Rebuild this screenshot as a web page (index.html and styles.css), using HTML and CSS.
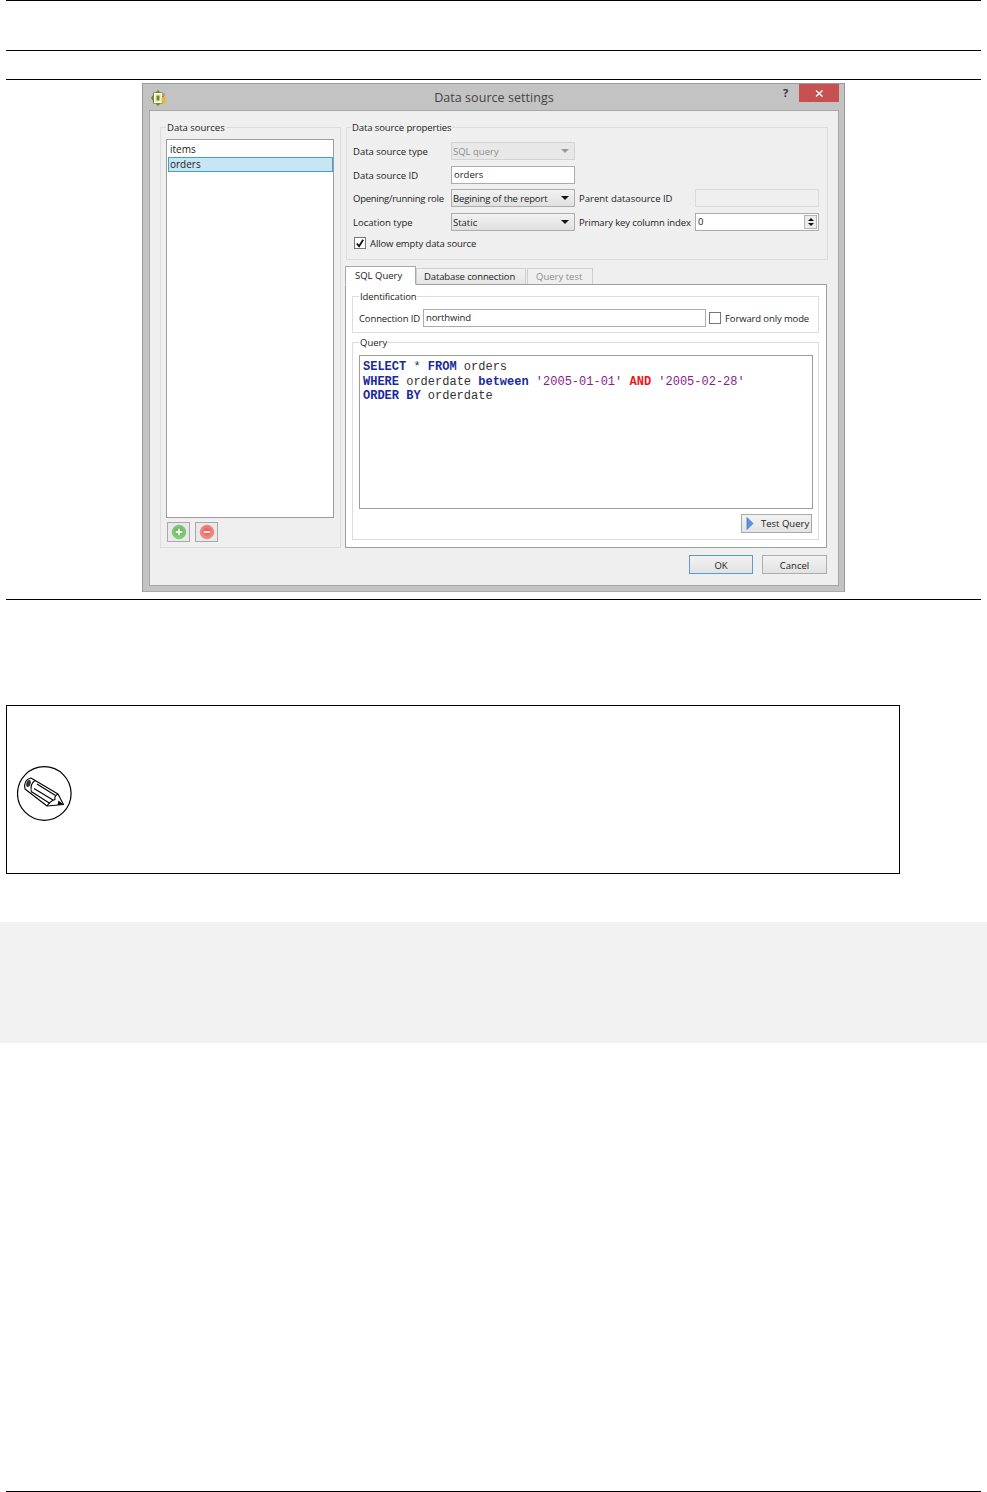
FILE: index.html
```html
<!DOCTYPE html>
<html lang="en">
<head>
<meta charset="utf-8">
<title>Data source settings</title>
<link rel="stylesheet" href="styles.css">
</head>
<body>
<div class="page">
  <div class="rule rule-top"></div>
  <div class="rule rule-b"></div>
  <div class="rule rule-c"></div>
  <figure class="figure">
    <div class="dialog">
      <div class="titlebar">
        <svg class="app-icon" viewBox="0 0 16 16" width="16" height="16"><path d="M7 0l2.500 2.500H12V5l1.500 3L12 11v2.500H9.500L7 16l-2.500-2.500H2V11L0 8l2-3V2.500h2.500z" fill="#6f8a1f"/><rect x="3.500" y="3.500" width="7" height="9" fill="#e8efd8" stroke="#fff"/><rect x="5.500" y="5.500" width="3" height="5" fill="#6f8a1f"/><rect x="10.500" y="7" width="4" height="6" fill="#e9b52e"/><rect x="11" y="3" width="3" height="3" fill="#c9948a"/></svg>
        <span class="title">Data source settings</span>
        <span class="help">?</span>
        <span class="close"><svg viewBox="0 0 9 9" width="9" height="9"><path d="M1 1.500l6.500 6M7.500 1.500L1 7.500" stroke="#fff" stroke-width="1.400" fill="none"/></svg></span>
      </div>
      <div class="client">
        <div class="panes">
          <section class="group sources">
            <span class="legend">Data sources</span>
            <div class="listbox">
              <div class="item">items</div>
              <div class="item selected">orders</div>
            </div>
            <div class="list-buttons">
              <button class="tool"><svg viewBox="0 0 16 16" width="16" height="16"><defs><radialGradient id="gg" cx=".5" cy=".45" r=".6"><stop offset="0" stop-color="#57ad4d"/><stop offset="1" stop-color="#93d488"/></radialGradient></defs><circle cx="8" cy="8" r="6.800" fill="url(#gg)" stroke="#6cb563" stroke-width=".7"/><path d="M8 4.800v6.400M4.800 8h6.400" stroke="#f2fff0" stroke-width="1.800"/></svg></button>
              <button class="tool"><svg viewBox="0 0 16 16" width="16" height="16"><defs><radialGradient id="rg" cx=".5" cy=".45" r=".6"><stop offset="0" stop-color="#e8524c"/><stop offset="1" stop-color="#f59a92"/></radialGradient></defs><circle cx="8" cy="8" r="6.800" fill="url(#rg)" stroke="#e0766f" stroke-width=".7"/><path d="M4.800 8h6.400" stroke="#fff4f2" stroke-width="1.800"/></svg></button>
            </div>
          </section>
          <div class="right">
            <section class="group props">
              <span class="legend legend-props">Data source properties</span>
              <div class="form-row">
                <span class="lbl">Data source type</span>
                <div class="combo disabled"><span>SQL query</span><i class="arrow"></i></div>
              </div>
              <div class="form-row">
                <span class="lbl">Data source ID</span>
                <div class="field wide">orders</div>
              </div>
              <div class="form-row">
                <span class="lbl tighter">Opening/running role</span>
                <div class="combo"><span class="tight">Begining of the report</span><i class="arrow"></i></div>
                <span class="lbl2">Parent datasource ID</span>
                <div class="field parent"></div>
              </div>
              <div class="form-row">
                <span class="lbl">Location type</span>
                <div class="combo"><span>Static</span><i class="arrow"></i></div>
                <span class="lbl2 tight">Primary key column index</span>
                <div class="field spin"><span>0</span><span class="spinner"><i class="up"></i><i class="down"></i></span></div>
              </div>
              <label class="check-row"><span class="check"><svg viewBox="0 0 11 11" width="11" height="11"><path d="M2 5.500l2.500 3L9 1.500" stroke="#111" stroke-width="2" fill="none"/></svg></span><span class="tight">Allow empty data source</span></label>
            </section>
            <div class="tabs">
              <span class="tab active">SQL Query</span>
              <span class="tab db"><span class="tight">Database connection</span></span>
              <span class="tab off">Query test</span>
            </div>
            <div class="tabpanel">
              <section class="group ident">
                <span class="legend"><span class="tight">Identification</span></span>
                <span class="conn-lbl tight">Connection ID</span>
                <div class="field conn"><span class="tight">northwind</span></div>
                <span class="check empty"></span>
                <span class="fwd tight">Forward only mode</span>
              </section>
              <section class="group query">
                <span class="legend">Query</span>
                <pre class="editor"><span class="kw">SELECT</span> * <span class="kw">FROM</span> orders
<span class="kw">WHERE</span> orderdate <span class="kw">between</span> <span class="str">'2005-01-01'</span> <span class="red">AND</span> <span class="str">'2005-02-28'</span>
<span class="kw">ORDER BY</span> orderdate</pre>
                <div class="test-row"><button class="test"><svg viewBox="0 0 8 13" width="8" height="13"><path d="M1 .500L7 6.500 1 12.500z" fill="#5b93de" stroke="#3b74c4" stroke-width=".7"/></svg>Test Query</button></div>
              </section>
            </div>
          </div>
        </div>
        <div class="actions">
          <button class="btn default">OK</button>
          <button class="btn cancel">Cancel</button>
        </div>
      </div>
    </div>
  </figure>
  <div class="rule rule-d"></div>
  <aside class="note">
    <svg class="pencil" viewBox="0 0 55 55" width="55" height="55">
      <circle cx="27.300" cy="27.500" r="26.800" fill="#fff" stroke="#000" stroke-width="1.200"/>
      <g fill="none" stroke="#000" stroke-width="1.100" stroke-linejoin="round">
        <path d="M8 23Q6 14 14 12L41 28 46.500 38.500 30 40Z" fill="#fff"/>
        <path d="M18 14.500Q12.500 18 14.500 26.500"/>
        <path d="M20 18L38.500 29.500M17 22.500L36 34M15 26L33 37.500"/>
        <path d="M41 28Q37 30 38 33.500 33 35 30 40"/>
      </g>
      <ellipse cx="11.500" cy="17.500" rx="2.200" ry="3.600" fill="#333" transform="rotate(15 11.500 17.500)"/>
      <path d="M46.500 38.500L41.500 34.500 40.500 39z" fill="#000"/>
    </svg>
  </aside>
  <div class="band"></div>
  <div class="rule rule-bottom"></div>
</div>
</body>
</html>
```
FILE: styles.css
```css
* { box-sizing: border-box; }
html, body { margin: 0; padding: 0; background: #fff; }
body { font-family: "Open Sans", "Noto Sans", sans-serif; color: #222; }
.page { width: 987px; height: 1492px; overflow: hidden; display: flex; flex-direction: column; }
.rule { height: 1px; margin: 0 6px; background: #000; flex: none; }
.rule-b { margin-top: 49px; }
.rule-c { margin-top: 28px; }
.figure { margin: 3px 0 0 142px; width: 703px; height: 509px; flex: none; }
.rule-d { margin-top: 7px; }
.tight { letter-spacing: -.12px; }
.tighter { letter-spacing: -.25px; }

.dialog { width: 703px; height: 509px; background: #c3c3c3; border: 1px solid #9a9a9a; border-bottom-color: #aaa; padding: 0 5px 5px 6px; display: flex; flex-direction: column; font-size: 10px; }
.titlebar { height: 26px; flex: none; display: flex; align-items: center; position: relative; }
.app-icon { margin: 1px 0 0 2px; }
.title { position: absolute; left: 0; right: 0; text-align: center; font-size: 12.500px; color: #444; top: 5px; letter-spacing: .05px; }
.help { position: absolute; left: 634px; top: 1px; font-weight: 700; font-size: 11px; color: #333; }
.close { position: absolute; right: 0; top: 0; width: 40px; height: 18px; background: #c75050; display: flex; align-items: center; justify-content: center; }
.client { flex: 1; background: #efefef; border: 1px solid #a6a6a6; padding: 16px 10px 0 10px; display: flex; flex-direction: column; }
.panes { display: flex; gap: 4px; }
.group { border: 1px solid #dcdcdc; position: relative; }
.legend { position: absolute; left: 5px; top: -6px; background: #efefef; padding: 0 1px; line-height: 11px; font-size: 9.500px; white-space: nowrap; }
.legend-props { left: 4px; letter-spacing: -.1px; }
.sources { width: 181px; height: 421px; flex: none; padding: 11px 6px 0 5px; }
.listbox { height: 379px; background: #fff; border: 1px solid #9d9d9d; padding: 2px 0 0 1px; font-size: 10px; }
.item { height: 15px; line-height: 15px; padding-left: 2px; }
.selected { background: #c8e5f4; border: 1px solid #3f9fd6; line-height: 13px; padding-left: 1px; }
.list-buttons { display: flex; gap: 5px; margin-top: 4px; margin-left: 1px; }
.tool { width: 23px; height: 20px; padding: 0; background: #e9e9e9; border: 1px solid #a8a8a8; display: flex; align-items: center; justify-content: center; }
.right { width: 483px; flex: none; display: flex; flex-direction: column; }
.props { height: 133px; margin-left: 1px; padding-top: 14px; padding-left: 6px; }
.form-row { display: flex; align-items: center; height: 18px; margin-bottom: 5px; white-space: nowrap; }
.form-row:nth-of-type(odd) { margin-bottom: 6px; }
.lbl { width: 98px; flex: none; font-size: 9.500px; }
.lbl2 { width: 116px; flex: none; margin-left: 4px; font-size: 9.500px; }
.combo { width: 124px; height: 18px; flex: none; border: 1px solid #acacac; background: linear-gradient(#f2f2f2, #e0e0e0); padding: 0 1px; display: flex; align-items: center; justify-content: space-between; font-size: 9.500px; }
.combo .arrow { width: 0; height: 0; border: 4px solid transparent; border-top: 4px solid #111; border-bottom: 0; margin-right: 4px; }
.combo.disabled { color: #8c8c8c; border-color: #d2d2d2; background: #e8e8e8; }
.combo.disabled .arrow { border-top-color: #999; }
.field { height: 18px; flex: none; background: #fff; border: 1px solid #acacac; font-size: 9.500px; line-height: 16px; padding-left: 2px; }
.wide { width: 124px; }
.parent { width: 124px; background: #efefef; border: 1px solid #dadada; }
.spin { width: 124px; display: flex; justify-content: space-between; }
.spinner { width: 13px; margin: 1px; border: 1px solid #b4b4b4; display: flex; flex-direction: column; background: #ececec; align-items: center; justify-content: center; gap: 2px; }
.spinner i { width: 0; height: 0; border-left: 3px solid transparent; border-right: 3px solid transparent; }
.spinner .up { border-bottom: 3px solid #111; }
.spinner .down { border-top: 3px solid #111; }
.check-row { display: flex; align-items: center; gap: 4px; height: 14px; font-size: 9.500px; margin-left: 1px; }
.check { width: 12px; height: 12px; background: #fff; border: 1px solid #777; display: inline-flex; align-items: center; justify-content: center; flex: none; }
.tabs { display: flex; margin-top: 6px; height: 18px; align-items: flex-end; position: relative; z-index: 1; }
.tab { height: 16px; padding: 0 0 0 8px; line-height: 15px; font-size: 9.500px; border: 1px solid #cfcfcf; border-bottom: 0; background: linear-gradient(#f2f2f2, #e5e5e5); white-space: nowrap; flex: none; }
.tab.active { height: 19px; width: 71px; padding-left: 9px; background: #fff; border-color: #a8a8a8; border-bottom: 1px solid #fff; margin-bottom: -1px; line-height: 17px; }
.tab.db { width: 110px; padding-left: 7px; margin-right: 1px; }
.tab.off { width: 66px; color: #8e8e8e; background: #efefef; }
.tabpanel { width: 482px; height: 264px; background: #fff; border: 1px solid #a0a0a0; padding: 11px 7px 0 6px; }
.tabpanel .legend { background: #fff; left: 6px; }
.ident { height: 37px; display: flex; align-items: center; padding: 7px 0 0 6px; }
.conn-lbl { width: 64px; flex: none; font-size: 9.500px; padding-top: 1px; }
.conn { width: 283px; height: 18px; margin-right: 3px; }
.check.empty { margin-right: 4px; }
.fwd { font-size: 9.500px; white-space: nowrap; }
.query { margin-top: 9px; height: 198px; padding: 12px 5px 0 6px; }
.editor { margin: 0; height: 154px; background: #fff; border: 1px solid #9d9d9d; padding: 4px 3px 3px; font-family: "Liberation Mono", "DejaVu Sans Mono", monospace; font-size: 12px; line-height: 14.500px; color: #333; }
.kw { color: #1a2a9c; font-weight: 700; }
.str { color: #8b1a8b; }
.red { color: #e8181b; font-weight: 700; }
.test-row { display: flex; justify-content: flex-end; margin: 5px 1px 0 0; }
.test { width: 71px; height: 19px; padding: 0 0 0 4px; background: linear-gradient(#f2f2f2, #e4e4e4); border: 1px solid #a8a8a8; display: flex; align-items: center; gap: 7px; font: 9.500px "Open Sans", sans-serif; color: #222; white-space: nowrap; }
.actions { display: flex; justify-content: flex-end; gap: 9px; margin: 7px 1px 0 0; }
.btn { width: 64px; height: 19px; padding: 1px 0 0; background: linear-gradient(#f2f2f2, #e2e2e2); border: 1px solid #adadad; font: 9.500px "Open Sans", sans-serif; color: #222; }
.cancel { width: 65px; }
.default { border-color: #5a9ad6; }

.note { margin: 105px 0 0 6px; width: 894px; height: 169px; border: 1px solid #000; padding: 60px 0 0 10px; flex: none; }
.pencil { display: block; }
.band { margin-top: 48px; height: 121px; background: #f2f2f2; flex: none; }
.rule-bottom { margin-top: auto; }
```
